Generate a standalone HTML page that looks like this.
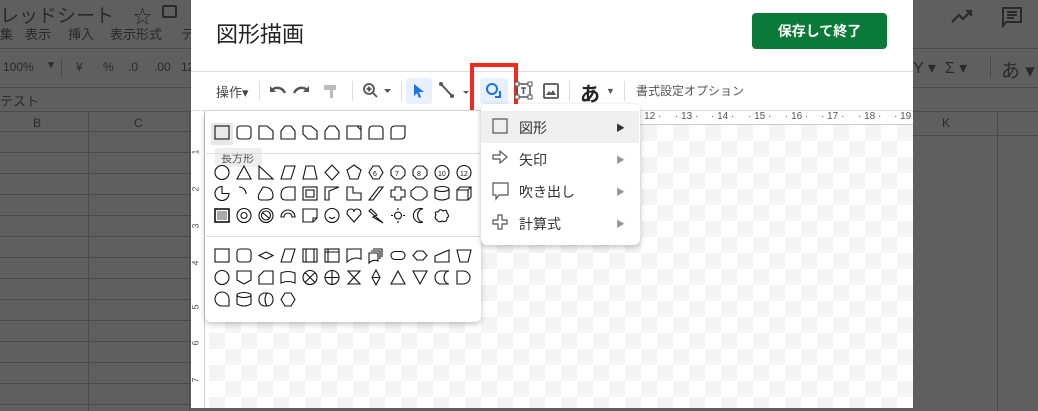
<!DOCTYPE html><html><head><meta charset="utf-8"><style>
*{margin:0;padding:0;box-sizing:border-box}
body{width:1038px;height:408px;overflow:hidden;background:#5f5f5f;font-family:"Liberation Sans","Noto Sans CJK JP",sans-serif;position:relative}
.a{position:absolute}
.s{position:absolute;color:#2a2a2a;font-size:13px;white-space:nowrap}
.grid{left:0;top:111px;width:191px;height:300px;background:
repeating-linear-gradient(to bottom,transparent 0 20px,#4a4a4a 20px 21px);}
.dlg{left:191px;top:0;width:722px;height:408px;background:#fff}
.chk{left:209px;top:125px;width:704px;height:283px;background-color:#fff;background-image:linear-gradient(45deg,#f4f4f4 25%,transparent 25%,transparent 75%,#f4f4f4 75%),linear-gradient(45deg,#f4f4f4 25%,transparent 25%,transparent 75%,#f4f4f4 75%);background-size:32px 32px;background-position:0 0,16px 16px}
.pop{background:#fff;border-radius:6px;box-shadow:0 2px 6px rgba(0,0,0,.25)}
.mi{position:absolute;left:0;width:159px;height:32px;font-size:14px;color:#333}
.mi span{position:absolute;left:38px;top:7px}
.mi b{position:absolute;left:135px;top:10px;font-size:9px;color:#999;font-weight:normal}
.rn{position:absolute;top:111px;font-size:10px;color:#555;white-space:pre}
.vn{position:absolute;left:193px;font-size:9px;color:#555;transform:rotate(-90deg)}
</style></head><body>
<div class="s" style="left:0;top:1px;font-size:19px">レッドシート</div>
<div class="s" style="left:133px;top:2px;font-size:19px">☆</div>
<div class="a" style="left:162px;top:5px;width:15px;height:13px;border:2px solid #2a2a2a;border-radius:2px"></div>
<div class="s" style="left:0;top:24px">集</div>
<div class="s" style="left:25px;top:24px">表示</div>
<div class="s" style="left:68px;top:24px">挿入</div>
<div class="s" style="left:110px;top:24px">表示形式</div>
<div class="s" style="left:181px;top:24px">テ</div>
<div class="a" style="left:0;top:48px;width:191px;height:1px;background:#4a4a4a"></div>
<div class="s" style="left:3px;top:60px;font-size:12px">100%</div>
<div class="s" style="left:46px;top:60px;font-size:10px">▼</div>
<div class="a" style="left:61px;top:58px;width:1px;height:20px;background:#4a4a4a"></div>
<div class="s" style="left:76px;top:60px;font-size:12px">¥</div>
<div class="s" style="left:103px;top:60px;font-size:12px">%</div>
<div class="s" style="left:128px;top:60px;font-size:12px">.0</div>
<div class="s" style="left:154px;top:60px;font-size:12px">.00</div>
<div class="s" style="left:181px;top:60px;font-size:12px">12</div>
<div class="a" style="left:0;top:87px;width:191px;height:1px;background:#4a4a4a"></div>
<div class="s" style="left:0;top:91px">テスト</div>
<div class="a grid"></div>
<div class="a" style="left:0;top:111px;width:191px;height:1px;background:#4a4a4a"></div>
<div class="a" style="left:88px;top:111px;width:1px;height:300px;background:#4a4a4a"></div>
<div class="a" style="left:189px;top:111px;width:1px;height:300px;background:#4a4a4a"></div>
<div class="s" style="left:33px;top:116px;font-size:12px">B</div>
<div class="s" style="left:134px;top:116px;font-size:12px">C</div>
<div class="a" style="left:913px;top:48px;width:125px;height:1px;background:#4a4a4a"></div>
<div class="a" style="left:913px;top:87px;width:125px;height:1px;background:#4a4a4a"></div>
<div class="a" style="left:913px;top:111px;width:125px;height:1px;background:#4a4a4a"></div>
<div class="a" style="left:913px;top:135px;width:125px;height:1px;background:#4a4a4a"></div>
<div class="a" style="left:997px;top:111px;width:1px;height:300px;background:#4a4a4a"></div>
<div class="s" style="left:942px;top:116px;font-size:12px">K</div>
<svg class="a" style="left:950px;top:8px" width="26" height="18"><path d="M2 14 L9 7 L13 11 L21 3 M16 3 H21 V8" stroke="#2a2a2a" stroke-width="2.2" fill="none"/></svg>
<svg class="a" style="left:1001px;top:6px" width="22" height="22"><path d="M2 2 H20 V16 H5 L2 20 Z M6 6 H16 M6 9 H16 M6 12 H13" stroke="#2a2a2a" stroke-width="2" fill="none"/></svg>
<div class="s" style="left:913px;top:58px;font-size:16px;white-space:pre">Y ▾  Σ ▾</div>
<div class="a" style="left:990px;top:56px;width:1px;height:22px;background:#4a4a4a"></div>
<div class="s" style="left:1001px;top:56px;font-size:19px;white-space:pre">あ ▾</div>

<div class="a dlg"></div>
<div class="a" style="left:216px;top:17px;font-size:22px;color:#222">図形描画</div>
<div class="a" style="left:752px;top:13px;width:135px;height:36px;background:#0b7a38;border-radius:4px;color:#fff;font-size:14px;text-align:center;line-height:36px;font-weight:bold">保存して終了</div>
<div class="a" style="left:191px;top:71px;width:722px;height:1px;background:#ddd"></div>
<div class="a" style="left:216px;top:82px;font-size:13px;color:#444">操作▾</div>
<div class="a" style="left:259px;top:81px;width:1px;height:20px;background:#ddd"></div>
<svg class="a" style="left:268px;top:83px" width="80" height="16">
<path d="M3 8 C7 3 14 4 17 10" stroke="#555" stroke-width="2.4" fill="none"/><path d="M2 3 V9 H8 Z" fill="#555"/>
<path d="M40 8 C36 3 29 4 26 10" stroke="#555" stroke-width="2.4" fill="none"/><path d="M41 3 V9 H35 Z" fill="#555"/>
<rect x="56" y="2" width="12" height="5" fill="#bbb"/><rect x="62" y="7" width="3" height="8" fill="#bbb"/></svg>
<div class="a" style="left:352px;top:81px;width:1px;height:20px;background:#ddd"></div>
<svg class="a" style="left:362px;top:82px" width="34" height="18"><circle cx="7" cy="7" r="5" stroke="#555" stroke-width="1.8" fill="none"/><path d="M11 11 L15 15 M4.5 7 H9.5 M7 4.5 V9.5" stroke="#555" stroke-width="1.8"/><path d="M22 7 H29 L25.5 11Z" fill="#555"/></svg>
<div class="a" style="left:401px;top:81px;width:1px;height:20px;background:#ddd"></div>
<div class="a" style="left:406px;top:78px;width:26px;height:26px;background:#e8f0fe;border-radius:3px"></div>
<svg class="a" style="left:410px;top:82px" width="18" height="18"><path d="M4 2 L14 10 L9 10 L11 15 L9 16 L7 11 L4 14 Z" fill="#1a73e8"/></svg>
<svg class="a" style="left:438px;top:80px" width="34" height="22"><path d="M3 4 L14 16" stroke="#555" stroke-width="2"/><circle cx="3" cy="4" r="2" fill="#555"/><circle cx="14" cy="16" r="2" fill="#555"/><path d="M25 11 H31 L28 14Z" fill="#555"/></svg>
<div class="a" style="left:480px;top:78px;width:28px;height:26px;background:#e8f0fe;border-radius:3px"></div>
<svg class="a" style="left:484px;top:81px" width="20" height="20"><circle cx="8" cy="8" r="5" stroke="#1a73e8" stroke-width="2" fill="none"/><path d="M11 16 H16 V10" stroke="#1a73e8" stroke-width="2" fill="none"/></svg>
<div class="a" style="left:470px;top:63px;width:48px;height:53px;border:4px solid #ee2c1c"></div>
<svg class="a" style="left:514px;top:81px" width="20" height="20"><rect x="3" y="3" width="13" height="13" stroke="#555" stroke-width="1.5" fill="none"/><rect x="1" y="1" width="4" height="4" fill="#fff" stroke="#555"/><rect x="14" y="1" width="4" height="4" fill="#fff" stroke="#555"/><rect x="1" y="14" width="4" height="4" fill="#fff" stroke="#555"/><rect x="14" y="14" width="4" height="4" fill="#fff" stroke="#555"/><path d="M7 7 H12 M9.5 7 V13" stroke="#555" stroke-width="1.6"/></svg>
<svg class="a" style="left:542px;top:82px" width="18" height="18"><rect x="2" y="2" width="14" height="14" rx="1" stroke="#555" stroke-width="1.8" fill="none"/><path d="M4 13 L7 9 L9 11 L11 8 L14 13Z" fill="#555"/></svg>
<div class="a" style="left:569px;top:81px;width:1px;height:20px;background:#ddd"></div>
<div class="a" style="left:580px;top:78px;font-size:20px;font-weight:bold;color:#222">あ</div>
<div class="a" style="left:606px;top:86px;font-size:9px;color:#555">▼</div>
<div class="a" style="left:624px;top:81px;width:1px;height:20px;background:#ddd"></div>
<div class="a" style="left:636px;top:82px;font-size:12px;color:#555">書式設定オプション</div>
<div class="a" style="left:191px;top:110px;width:722px;height:1px;background:#ddd"></div>
<div class="a" style="left:191px;top:111px;width:722px;height:14px;background:#fff;border-bottom:1px solid #ccc"></div>
<div class="rn" style="left:638px">· 12 ·</div>
<div class="rn" style="left:675px">· 13 ·</div>
<div class="rn" style="left:711px">· 14 ·</div>
<div class="rn" style="left:748px">· 15 ·</div>
<div class="rn" style="left:785px">· 16 ·</div>
<div class="rn" style="left:821px">· 17 ·</div>
<div class="rn" style="left:858px">· 18 ·</div>
<div class="rn" style="left:894px">· 19</div>
<div class="a" style="left:191px;top:111px;width:14px;height:297px;background:#fff;border-right:1px solid #ccc"></div>
<div class="a chk"></div>
<div class="vn" style="top:147px">1</div>
<div class="vn" style="top:184px">2</div>
<div class="vn" style="top:221px">3</div>
<div class="vn" style="top:258px">4</div>
<div class="vn" style="top:302px">5</div>
<div class="vn" style="top:338px">6</div>
<div class="vn" style="top:375px">7</div>
<div class="a pop" style="left:205px;top:111px;width:276px;height:211px"></div>
<div class="a" style="left:211px;top:123px;width:22px;height:22px;background:#e8e8e8"></div>
<div class="a" style="left:215px;top:148px;width:47px;height:19px;background:#eee;border-radius:3px;font-size:11px;color:#555;padding:2px 0 0 6px">長方形</div>
<div class="a" style="left:206px;top:153px;width:274px;height:1px;background:#ddd"></div>
<div class="a" style="left:206px;top:236px;width:274px;height:1px;background:#ddd"></div>
<svg class="a" style="left:205px;top:111px" width="276" height="211" fill="none" stroke="#111" stroke-width="1.1">
<g transform="translate(0,14)">
<rect x="10" y="1" width="14" height="13"/>
<rect x="32" y="1" width="14" height="13" rx="3"/>
<path d="M54 1 H62 L68 6 V14 H54Z"/>
<path d="M76 14 V6 L80 1 H86 L90 6 V14Z"/>
<path d="M98 1 H106 L112 6 V14 H103 L98 9Z"/>
<path d="M120 14 V6 L124 1 H130 L134 6 V14Z"/>
<path d="M142 1 H156 V14 H142Z M152 1 L156 5"/>
<path d="M164 14 V5 Q164 1 168 1 H174 Q178 1 178 5 V14Z"/>
<path d="M186 14 V5 Q186 1 190 1 H200 V10 Q200 14 196 14Z"/>
</g>
<g transform="translate(0,54)">
<circle cx="17" cy="7.5" r="7"/>
<path d="M32 14 L39 1 L46 14Z"/>
<path d="M54 1 V14 H68Z"/>
<path d="M76 14 L80 1 H90 L86 14Z"/>
<path d="M98 14 L101 1 H109 L112 14Z"/>
<path d="M127 0 L134 7.5 L127 15 L120 7.5Z"/>
<path d="M149 0 L156 5 L153 14 H145 L142 5Z"/>
<path d="M168 1 H174 L178 7.5 L174 14 H168 L164 7.5Z"/>
<path d="M190 1 H196 L200 5 V10 L196 14 H190 L186 10 V5Z"/>
<path d="M212 1 H218 L222 5 V10 L218 14 H212 L208 10 V5Z"/>
<circle cx="237" cy="7.5" r="7"/><circle cx="259" cy="7.5" r="7"/>
</g>
<g font-size="7" fill="#111" stroke="none" font-family="Liberation Sans"><text x="168" y="65">6</text><text x="190" y="65">7</text><text x="212" y="65">8</text><text x="233" y="65">10</text><text x="255" y="65">12</text></g>
<g transform="translate(0,75)">
<path d="M17 7.5 H24 A7 7 0 1 1 17 0.5Z"/>
<path d="M34 1 A7 7 0 0 1 41 8"/>
<path d="M58 1 Q68 1 68 10 Q68 14 62 14 H56 Q52 14 54 8Z"/>
<path d="M84 1 H90 V14 H80 Q76 14 76 9 Q76 1 84 1Z"/>
<rect x="98" y="1" width="14" height="13"/><rect x="101" y="4" width="8" height="7"/>
<path d="M120 14 V1 H134 L124 5 V14Z"/>
<path d="M142 1 H148 V7 H156 V14 H142Z"/>
<path d="M164 14 L174 1 H178 L168 14Z"/>
<path d="M190 1 H196 V4 H200 V11 H196 V14 H190 V11 H186 V4 H190Z"/>
<path d="M211 1 H217 L222 5 V10 L217 14 H211 L206 10 V5Z"/>
<ellipse cx="237" cy="3" rx="7" ry="2.5"/><path d="M230 3 V12 Q237 16 244 12 V3"/>
<path d="M252 4 H263 V14 H252Z M252 4 L255 1 H266 V11 L263 14 M263 4 L266 1"/>
</g>
<g transform="translate(0,97)">
<rect x="10" y="1" width="14" height="13" stroke-width="1.6"/><rect x="12" y="3" width="10" height="9" fill="#aaa" stroke="none"/>
<circle cx="39" cy="7.5" r="7"/><circle cx="39" cy="7.5" r="3"/>
<circle cx="61" cy="7.5" r="7"/><circle cx="61" cy="7.5" r="4.5"/><path d="M58 5 L64 10"/>
<path d="M76 9 A7 7 0 0 1 90 9 H87 A4 4 0 0 0 79 9Z"/>
<path d="M98 1 H112 V10 L108 14 H98Z M108 14 V10 H112"/>
<circle cx="127" cy="7.5" r="7"/><path d="M124 9 Q127 12 130 9"/>
<path d="M149 14 L142 6 Q142 1 146 1 Q149 1 149 4 Q149 1 152 1 Q156 1 156 6Z"/>
<path d="M166 1 L172 7 L170 8 L178 15 L168 9 L170 8 L164 3Z"/>
<circle cx="193" cy="7.5" r="3.5"/><path d="M193 0 V2 M193 13 V15 M186 7.5 H188 M198 7.5 H200"/>
<path d="M218 1 A7 7 0 1 0 218 14 A5 6 0 1 1 218 1Z"/>
<path d="M233 4 Q235 0 238 3 Q242 1 242 5 Q245 8 242 10 Q242 15 237 13 Q234 15 232 12 Q229 10 231 7 Q229 3 233 4Z"/>
</g>
<g transform="translate(0,137)">
<rect x="10" y="1" width="14" height="13"/><rect x="32" y="1" width="14" height="13" rx="3"/>
<path d="M54 7.5 L61 4 L68 7.5 L61 11Z"/>
<path d="M76 14 L80 1 H90 L86 14Z"/>
<rect x="98" y="1" width="14" height="13"/><path d="M101 1 V14 M109 1 V14"/>
<rect x="120" y="1" width="14" height="13"/><path d="M120 4 H134 M123 1 V14"/>
<path d="M142 1 H156 V11 Q149 8 142 14Z"/>
<path d="M164 5 H173 V13 Q168 11 164 15Z M166 3 H175 V11 M168 1 H177 V9"/>
<rect x="186" y="3.5" width="14" height="8" rx="4"/>
<path d="M208 7.5 L212 3 H218 L222 7.5 L218 12 H212Z"/>
<path d="M230 14 V8 L244 2 V14Z"/>
<path d="M252 2 H266 L263 14 H255Z"/>
</g>
<g transform="translate(0,159)">
<circle cx="17" cy="7.5" r="7"/>
<path d="M32 1 H46 V10 L39 14 L32 10Z"/>
<path d="M54 14 V6 L59 1 H68 V14Z"/>
<path d="M76 3 Q83 0 90 3 V13 Q83 10 76 13Z"/>
<circle cx="105" cy="7.5" r="7"/><path d="M100 2.5 L110 12.5 M110 2.5 L100 12.5"/>
<circle cx="127" cy="7.5" r="7"/><path d="M120 7.5 H134 M127 0.5 V14.5"/>
<path d="M143 1 H155 L143 14 H155Z"/>
<path d="M171 0 L175 7.5 L171 15 L167 7.5Z M167 7.5 H175"/>
<path d="M193 1 L200 14 H186Z"/>
<path d="M208 1 H222 L215 14Z"/>
<path d="M244 1 H236 A6 6.5 0 0 0 236 14 H244 A5 6.5 0 0 1 244 1Z"/>
<path d="M252 1 H258 A7 6.5 0 0 1 258 14 H252Z"/>
</g>
<g transform="translate(0,181)">
<path d="M17 14 A7 7 0 1 1 24 7.5 V14Z"/>
<ellipse cx="39" cy="3" rx="7" ry="2.5"/><path d="M32 3 V12 Q39 16 46 12 V3"/>
<rect x="54" y="1" width="14" height="13" rx="6"/><path d="M62 1 Q58 7.5 62 14"/>
<path d="M80 1 H86 L90 7.5 L86 14 H80 L76 7.5Z" stroke-linejoin="round"/>
</g>
</svg>
<div class="a pop" style="left:481px;top:104px;width:159px;height:141px"></div>
<div class="a" style="left:481px;top:111px;width:158px;height:32px;background:#efefef"></div>
<div class="mi" style="left:481px;top:111px"><span>図形</span><b style="color:#333">▶</b></div>
<div class="mi" style="left:481px;top:143px"><span>矢印</span><b>▶</b></div>
<div class="mi" style="left:481px;top:175px"><span>吹き出し</span><b>▶</b></div>
<div class="mi" style="left:481px;top:207px"><span>計算式</span><b>▶</b></div>
<svg class="a" style="left:492px;top:118px" width="20" height="120" fill="none" stroke="#555" stroke-width="1.2">
<rect x="1" y="1" width="14" height="14"/>
<path d="M1 37 H8 V33 L15 39 L8 45 V41 H1Z"/>
<path d="M1 65 H16 V77 H7 L4 81 V77 H1Z"/>
<path d="M6 97 H10 V102 H15 V106 H10 V111 H6 V106 H1 V102 H6Z"/>
</svg>
</body></html>
